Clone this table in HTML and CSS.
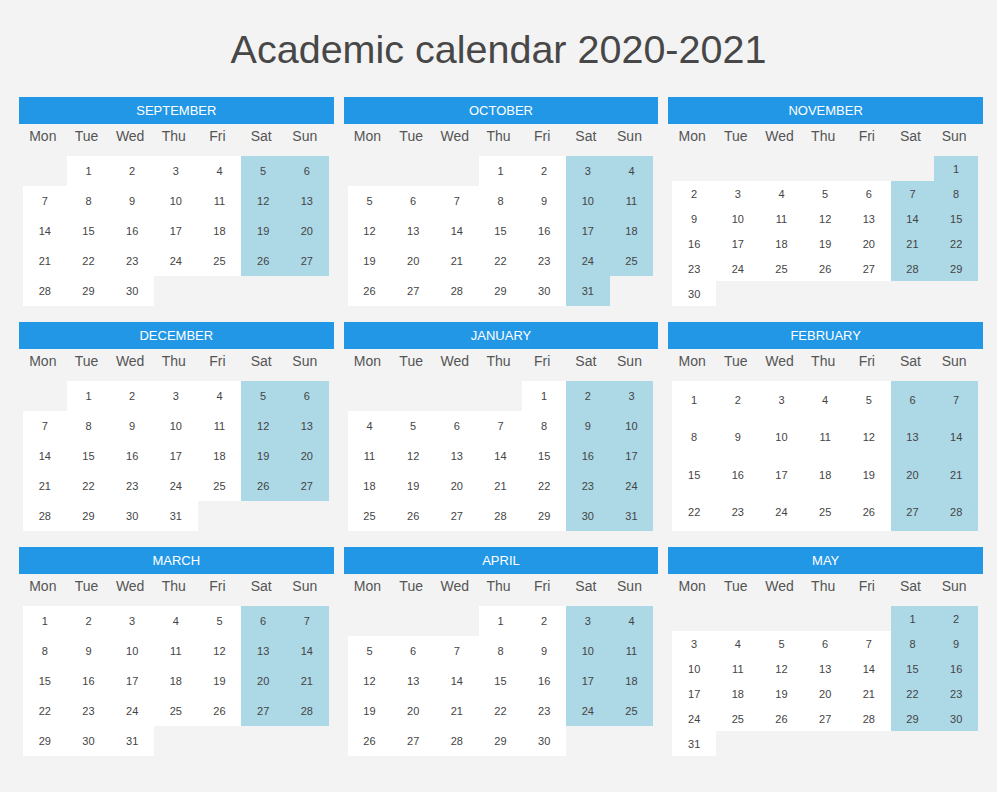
FILE: index.html
```html
<!DOCTYPE html>
<html lang="en">
<head>
  <meta charset="UTF-8">
  <meta name="viewport" content="width=device-width, initial-scale=1.0">
  <title>Academic calendar 2020-2021</title>
  <link rel="stylesheet" href="styles.css">
</head>
<body>
  <h1>Academic calendar 2020-2021</h1>
  <div class="year" id="year"></div>
  <script>
    const monthNames = ['JANUARY', 'FEBRUARY', 'MARCH', 'APRIL', 'MAY', 'JUNE', 'JULY',
      'AUGUST', 'SEPTEMBER', 'OCTOBER', 'NOVEMBER', 'DECEMBER'];
    const weekDays = ['Mon', 'Tue', 'Wed', 'Thu', 'Fri', 'Sat', 'Sun'];
    const year = document.getElementById('year');

    // September 2020 to May 2021
    for (let i = 0; i < 9; i++) {
      const first = new Date(2020, 8 + i, 1);
      const m = first.getMonth();
      const y = first.getFullYear();
      const days = new Date(y, m + 1, 0).getDate();
      const offset = (first.getDay() + 6) % 7; // monday first

      const month = document.createElement('div');
      month.className = 'month';

      const title = document.createElement('div');
      title.className = 'month-title';
      title.textContent = monthNames[m];
      month.appendChild(title);

      const head = document.createElement('div');
      head.className = 'week-days';
      weekDays.forEach(function(d) {
        const span = document.createElement('span');
        span.textContent = d;
        head.appendChild(span);
      });
      month.appendChild(head);

      const grid = document.createElement('div');
      grid.className = 'days';
      const total = Math.ceil((offset + days) / 7) * 7;
      for (let c = 0; c < total; c++) {
        const cell = document.createElement('span');
        const day = c - offset + 1;
        if (day >= 1 && day <= days) {
          cell.textContent = day;
          cell.className = (c % 7 >= 5) ? 'day weekend' : 'day';
        }
        grid.appendChild(cell);
      }
      month.appendChild(grid);
      year.appendChild(month);
    }
  </script>
</body>
</html>
```

FILE: styles.css
```css
body {
  margin: 0;
  padding-top: 26px;
  background: #f3f3f3;
  font-family: "Liberation Sans", Arial, sans-serif;
  color: #444;
}
h1 {
  margin: 0 0 25px;
  font-size: 39.5px;
  line-height: 46px;
  font-weight: normal;
  text-align: center;
  color: #474747;
}
.year {
  display: grid;
  grid-template-columns: repeat(3, 1fr);
  width: 964px;
  column-gap: 10px;
  row-gap: 16px;
  margin-left: 19px;
}
.month-title {
  height: 27px;
  line-height: 27px;
  background: #2297e6;
  color: #fff;
  font-size: 13px;
  text-align: center;
}
.week-days,
.days {
  display: grid;
  grid-template-columns: repeat(7, 1fr);
  margin: 0 5px 0 4px;
}
.week-days {
  height: 26px;
  line-height: 25px;
  margin-bottom: 6px;
  margin-left: 2px;
  margin-right: 7px;
  font-size: 14px;
  color: #555;
  text-align: center;
}
.days {
  height: 150px;
  grid-auto-rows: 1fr;
}
.days span {
  display: flex;
  align-items: center;
  justify-content: center;
  font-size: 11px;
  color: #444;
}
.days .day {
  background: #fff;
}
.days .weekend {
  background: #add8e6;
}
```
